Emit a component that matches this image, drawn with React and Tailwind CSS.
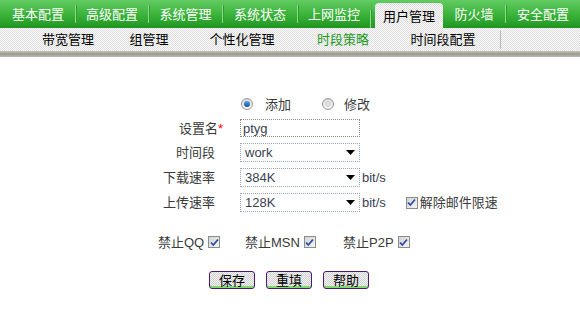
import React from "react";

const font = "font-['Liberation_Sans','Noto_Sans_CJK_SC',sans-serif]";

const tabs = [
  { label: "基本配置", w: "w-[75px]", sep: false },
  { label: "高级配置", w: "w-[73px]", sep: true },
  { label: "系统管理", w: "w-[74px]", sep: true },
  { label: "系统状态", w: "w-[75px]", sep: true },
  { label: "上网监控", w: "w-[73px]", sep: true },
];

const subItems = [
  { label: "带宽管理", w: "w-[96px]" },
  { label: "组管理", w: "w-[66px]" },
  { label: "个性化管理", w: "w-[120px]" },
  { label: "时段策略", w: "w-[82px]", active: true },
  { label: "时间段配置", w: "w-[118px]" },
];

function Sep() {
  return <div className="w-px h-[18px] bg-[#8ed88e] shadow-[1px_0_0_#2f9e2f]" />;
}

function Radio({ checked }) {
  return (
    <span className="w-[12px] h-[12px] rounded-full border border-[#9a9a9a] bg-gradient-to-b from-[#d8d8d8] to-[#f8f8f8] flex items-center justify-center">
      {checked ? (
        <span className="w-[6px] h-[6px] rounded-full bg-gradient-to-b from-[#5aa8e8] to-[#0a4f9a]" />
      ) : (
        <span className="w-[6px] h-[6px] rounded-full bg-[#dcdcdc]" />
      )}
    </span>
  );
}

function Check() {
  return (
    <span className="w-[12px] h-[12px] border border-[#8c8c8c] bg-gradient-to-br from-[#d4d4d4] to-[#f4f4f4] flex items-center justify-center shrink-0">
      <svg width="9" height="9" viewBox="0 0 9 9">
        <path d="M1 4.5 L3.3 7 L8 1.5" fill="none" stroke="#2a4fa8" strokeWidth="1.8" />
      </svg>
    </span>
  );
}

function Select({ value }) {
  return (
    <div className="w-[120px] h-[19px] border border-dotted border-[#9aa4c0] bg-white flex items-center justify-between pl-[4px] pr-[4px] text-[#3a3f52]">
      <span className="text-[13px] leading-none">{value}</span>
      <svg width="9" height="5" viewBox="0 0 9 5">
        <path d="M0 0 H9 L4.5 5 Z" fill="#000" />
      </svg>
    </div>
  );
}

function Btn({ children }) {
  return (
    <button className="w-[46px] h-[18px] rounded-[3px] border border-[#4b1a72] bg-[repeating-conic-gradient(#f2f2f2_0_25%,#d2d2d2_0_50%)] bg-[length:2px_2px] shadow-[inset_0_-2px_0_#7fdc6a] flex items-center justify-center text-[13px] leading-none text-black">
      {children}
    </button>
  );
}

export default function App() {
  return (
    <div className={`w-[580px] h-[314px] bg-white overflow-hidden ${font}`}>
      {/* top tabs */}
      <div className="h-[28px] flex items-end bg-gradient-to-b from-[#62cc62] via-[#3cb43c] to-[#1f961f] text-white text-[13px]">
        {tabs.map((t) => (
          <div key={t.label} className={`${t.w} h-[28px] flex items-center`}>
            {t.sep ? <Sep /> : <div className="w-px" />}
            <div className="flex-1 text-center leading-none">{t.label}</div>
          </div>
        ))}
        <Sep />
        <div className="w-[4px]" />
        <div className="w-[68px] h-[25px] rounded-t-[4px] bg-[repeating-conic-gradient(#fafafa_0_25%,#dedede_0_50%)] bg-[length:2px_2px] text-black flex items-center justify-center leading-none pt-[1px]">
          用户管理
        </div>
        <div className="w-[62px] h-[28px] flex items-center justify-center leading-none">防火墙</div>
        <div className="w-[75px] h-[28px] flex items-center">
          <Sep />
          <div className="flex-1 text-center leading-none">安全配置</div>
        </div>
      </div>

      {/* sub menu */}
      <div className="h-[23px] flex items-center pl-[20px] bg-[repeating-conic-gradient(#fafafa_0_25%,#dedede_0_50%)] bg-[length:2px_2px] text-[13px] text-black">
        {subItems.map((s) => (
          <div
            key={s.label}
            className={`${s.w} text-center leading-none ${s.active ? "text-[#1c9a1c]" : ""}`}
          >
            {s.label}
          </div>
        ))}
        <div className="w-px h-[18px] bg-[#b8b8b8] ml-[-2px]" />
      </div>
      <div className="h-[6px] bg-gradient-to-b from-[#c4c4c4] via-[#9b9b88] to-[#b9b9b9]" />

      {/* form */}
      <div className="text-[13px] text-[#3a3a3a]">
        <div className="mt-[40px] h-[14px] flex items-center pl-[241px]">
          <Radio checked />
          <span className="ml-[12px] leading-none">添加</span>
          <span className="ml-[31px]">
            <Radio />
          </span>
          <span className="ml-[10px] leading-none">修改</span>
        </div>

        <div className="mt-[8px] flex flex-col gap-[6px]">
          <div className="flex items-center h-[18px]">
            <div className="w-[223px] text-right leading-none">
              设置名<span className="text-[#ff0000]">*</span>
            </div>
            <div className="ml-[17px] w-[120px] h-[18px] border border-dotted border-[#8a8a8a] flex items-center pl-[2px] leading-none text-[#3a3f52]">
              ptyg
            </div>
          </div>
          <div className="flex items-center h-[19px]">
            <div className="w-[215px] text-right leading-none">时间段</div>
            <div className="ml-[25px]">
              <Select value="work" />
            </div>
          </div>
          <div className="flex items-center h-[19px]">
            <div className="w-[215px] text-right leading-none">下载速率</div>
            <div className="ml-[25px]">
              <Select value="384K" />
            </div>
            <span className="ml-[2px] leading-none text-[#3a3f52]">bit/s</span>
          </div>
          <div className="flex items-center h-[19px]">
            <div className="w-[215px] text-right leading-none">上传速率</div>
            <div className="ml-[25px]">
              <Select value="128K" />
            </div>
            <span className="ml-[2px] leading-none text-[#3a3f52]">bit/s</span>
            <span className="ml-[20px]">
              <Check />
            </span>
            <span className="ml-[2px] leading-none">解除邮件限速</span>
          </div>
        </div>

        <div className="mt-[23px] h-[14px] flex items-center pl-[158px]">
          <div className="w-[87px] flex items-center gap-[4px]">
            <span className="leading-none">禁止QQ</span>
            <Check />
          </div>
          <div className="w-[98px] flex items-center gap-[4px]">
            <span className="leading-none">禁止MSN</span>
            <Check />
          </div>
          <div className="flex items-center gap-[4px]">
            <span className="leading-none">禁止P2P</span>
            <Check />
          </div>
        </div>

        <div className="mt-[22px] flex pl-[209px] gap-[11px]">
          <Btn>保存</Btn>
          <Btn>重填</Btn>
          <Btn>帮助</Btn>
        </div>
      </div>
    </div>
  );
}
